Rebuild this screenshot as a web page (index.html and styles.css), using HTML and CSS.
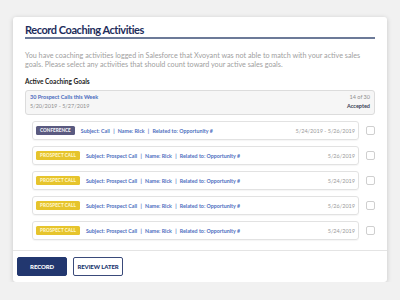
FILE: index.html
```html
<!DOCTYPE html>
<html>
<head>
<meta charset="utf-8">
<link rel="stylesheet" href="styles.css">
</head>
<body>
<div class="card">
  <div class="content">
    <h1 class="title">Record Coaching Activities</h1>
    <p class="desc">You have coaching activities logged in Salesforce that Xvoyant was not able to match with your active sales goals. Please select any activities that should count toward your active sales goals.</p>
    <h2 class="section">Active Coaching Goals</h2>
    <div class="goal">
      <div class="goal-left">
        <div class="goal-name">30 Prospect Calls this Week</div>
        <div class="goal-dates">5/20/2019 - 5/27/2019</div>
      </div>
      <div class="goal-right">
        <div class="goal-count">14 of 30</div>
        <div class="goal-status">Accepted</div>
      </div>
    </div>
    <div class="list">
      <div class="item">
        <div class="row">
          <span class="badge conf">CONFERENCE</span>
          <span class="info">Subject: Call <i>|</i> Name: Rick <i>|</i> Related to: Opportunity #</span>
          <span class="date">5/24/2019 - 5/26/2019</span>
        </div>
        <span class="check"></span>
      </div>
      <div class="item">
        <div class="row">
          <span class="badge pc">PROSPECT CALL</span>
          <span class="info">Subject: Prospect Call <i>|</i> Name: Rick <i>|</i> Related to: Opportunity #</span>
          <span class="date">5/26/2019</span>
        </div>
        <span class="check"></span>
      </div>
      <div class="item">
        <div class="row">
          <span class="badge pc">PROSPECT CALL</span>
          <span class="info">Subject: Prospect Call <i>|</i> Name: Rick <i>|</i> Related to: Opportunity #</span>
          <span class="date">5/24/2019</span>
        </div>
        <span class="check"></span>
      </div>
      <div class="item">
        <div class="row">
          <span class="badge pc">PROSPECT CALL</span>
          <span class="info">Subject: Prospect Call <i>|</i> Name: Rick <i>|</i> Related to: Opportunity #</span>
          <span class="date">5/26/2019</span>
        </div>
        <span class="check"></span>
      </div>
      <div class="item">
        <div class="row">
          <span class="badge pc">PROSPECT CALL</span>
          <span class="info">Subject: Prospect Call <i>|</i> Name: Rick <i>|</i> Related to: Opportunity #</span>
          <span class="date">5/24/2019</span>
        </div>
        <span class="check"></span>
      </div>
    </div>
  </div>
  <div class="footer">
    <button class="btn primary">RECORD</button>
    <button class="btn secondary">REVIEW LATER</button>
  </div>
</div>
</body>
</html>
```
FILE: styles.css
```css
html, body {
  margin: 0;
  padding: 0;
  background: #f1f1f1;
  font-family: Lato, "Open Sans", sans-serif;
}
body {
  padding: 17px 13px 0 13px;
}
.card {
  background: #fff;
  border-radius: 3px;
  box-shadow: 0 1px 5px rgba(0,0,0,0.18);
  height: 265px;
  box-sizing: border-box;
  display: flex;
  flex-direction: column;
}
.content {
  padding: 6px 12px 0 12px;
  flex: 1;
}
.title {
  margin: 0;
  font-size: 11px;
  font-weight: 700;
  color: #1e2d5c;
  line-height: 14px;
  padding-bottom: 0;
  border-bottom: 2px solid #6c7a98;
  letter-spacing: -0.45px;
}
.desc {
  margin: 12px 0 0 0;
  font-size: 7.2px;
  line-height: 9px;
  color: #a0a0a0;
}
.section {
  margin: 8px 0 0 0;
  font-size: 6.5px;
  line-height: 9px;
  font-weight: 700;
  color: #222;
}
.goal {
  margin-top: 4px;
  height: 25px;
  box-sizing: border-box;
  background: #f6f6f6;
  border: 1px solid #dcdcdc;
  border-radius: 3px;
  display: flex;
  justify-content: space-between;
  padding: 2px 4px 0 4px;
}
.goal-name {
  font-size: 5.5px;
  font-weight: 700;
  color: #4a6bbd;
  line-height: 9px;
}
.goal-dates {
  font-size: 5.5px;
  color: #8f8f8f;
  line-height: 9px;
}
.goal-right {
  text-align: right;
}
.goal-count {
  font-size: 5.5px;
  color: #8f8f8f;
  line-height: 9px;
}
.goal-status {
  font-size: 5.5px;
  font-weight: 700;
  color: #3a3f55;
  line-height: 9px;
}
.list {
  margin-top: 6px;
  padding-left: 7px;
  display: flex;
  flex-direction: column;
  gap: 6px;
}
.item {
  display: flex;
  align-items: center;
  gap: 7px;
}
.row {
  flex: 1;
  height: 19px;
  box-sizing: border-box;
  border: 1px solid #e2e2e2;
  border-radius: 3px;
  display: flex;
  align-items: center;
  padding: 0 3px 0 3px;
  box-shadow: 0 1px 1px rgba(0,0,0,0.04);
}
.badge {
  font-size: 4.6px;
  font-weight: 900;
  line-height: 9px;
  height: 9px;
  padding: 0 4px;
  border-radius: 1.5px;
  letter-spacing: 0.05px;
}
.badge.conf {
  background: #5a5a80;
  color: #f2f2f8;
}
.badge.pc {
  background: #e6c42c;
  color: #fff6c8;
}
.info {
  margin-left: 6px;
  font-size: 5.3px;
  font-weight: 700;
  color: #4f6fc0;
  flex: 1;
}
.info i {
  font-style: normal;
  margin: 0 2px;
}
.date {
  font-size: 5.5px;
  color: #9a9a9a;
}
.check {
  width: 9px;
  height: 9px;
  box-sizing: border-box;
  border: 1px solid #cfcfcf;
  border-radius: 2px;
  background: #fff;
}
.footer {
  border-top: 1px solid #e4e4e4;
  height: 32px;
  box-sizing: border-box;
  padding: 6px 4px 0 4px;
  display: flex;
  gap: 6px;
  align-items: flex-start;
}
.btn {
  width: 50px;
  height: 19px;
  border-radius: 2px;
  font-family: Lato, sans-serif;
  font-size: 6px;
  font-weight: 900;
  padding: 0;
  letter-spacing: -0.1px;
}
.btn.primary {
  background: #22376f;
  border: 1px solid #22376f;
  color: #fff;
}
.btn.secondary {
  background: #fff;
  border: 1px solid #3a4a7a;
  color: #22376f;
}
```
